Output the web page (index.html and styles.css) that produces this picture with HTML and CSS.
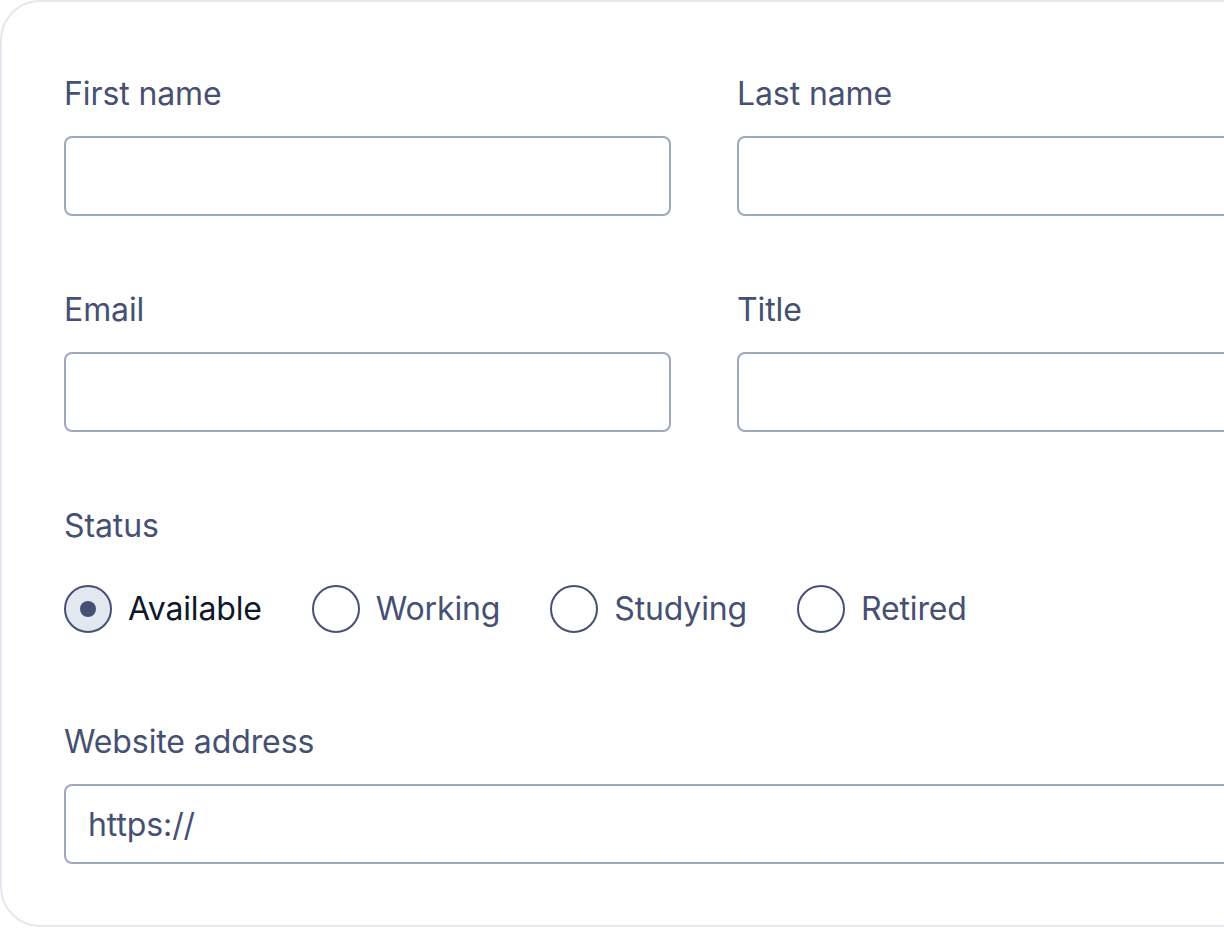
FILE: index.html
```html
<!DOCTYPE html>
<html lang="en">
<head>
<meta charset="utf-8">
<title>Profile form</title>
<link rel="stylesheet" href="styles.css">
</head>
<body>
<form class="card">
  <div class="grid">
    <div class="field">
      <label class="label" for="first">First name</label>
      <input class="input" id="first" type="text">
    </div>
    <div class="field">
      <label class="label" for="last">Last name</label>
      <input class="input" id="last" type="text">
    </div>
    <div class="field">
      <label class="label" for="email">Email</label>
      <input class="input" id="email" type="text">
    </div>
    <div class="field">
      <label class="label" for="title">Title</label>
      <input class="input" id="title" type="text">
    </div>
    <div class="field span">
      <div class="label">Status</div>
      <div class="radios">
        <label class="radio checked"><span class="circle"><span class="dot"></span></span><span class="rtext">Available</span></label>
        <label class="radio"><span class="circle"></span><span class="rtext">Working</span></label>
        <label class="radio"><span class="circle"></span><span class="rtext">Studying</span></label>
        <label class="radio"><span class="circle"></span><span class="rtext">Retired</span></label>
      </div>
    </div>
    <div class="field span">
      <label class="label" for="web">Website address</label>
      <input class="input" id="web" type="text" value="https://">
    </div>
  </div>
</form>
</body>
</html>
```
FILE: styles.css
```css
html, body {
  margin: 0;
  padding: 0;
  background: #ffffff;
  overflow: hidden;
}
body {
  font-family: Inter, "Noto Sans", sans-serif;
  color: #465072;
}
.card {
  box-sizing: border-box;
  width: 1408px;
  height: 927px;
  margin: 0;
  border: 2px solid #e2e8f0;
  border-radius: 40px;
  padding: 68px 62px 0 62px;
  background: #fff;
}
.grid {
  display: grid;
  grid-template-columns: 607px 607px;
  column-gap: 66px;
  row-gap: 70px;
}
.span {
  grid-column: 1 / -1;
}
.field {
  display: flex;
  flex-direction: column;
}
.label {
  font-size: 32px;
  line-height: 48px;
  letter-spacing: -0.1px;
  color: #465072;
  margin-bottom: 18px;
}
.input {
  box-sizing: border-box;
  height: 80px;
  width: 100%;
  border: 2px solid #9fa9bd;
  border-radius: 8px;
  padding: 0 22px;
  font-family: Inter, "Noto Sans", sans-serif;
  font-size: 32px;
  letter-spacing: -0.1px;
  color: #465072;
  background: #fff;
  outline: none;
}
.radios {
  display: flex;
  gap: 50px;
  margin-top: 17px;
  margin-bottom: 15px;
}
.radio {
  display: flex;
  align-items: center;
  gap: 16px;
  font-size: 32px;
  line-height: 48px;
  letter-spacing: -0.15px;
  color: #465072;
}
.circle {
  box-sizing: border-box;
  width: 48px;
  height: 48px;
  border: 2px solid #465072;
  border-radius: 50%;
  display: flex;
  align-items: center;
  justify-content: center;
  background: #fff;
}
.checked .circle {
  background: #e2e8f0;
}
.dot {
  width: 16px;
  height: 16px;
  border-radius: 50%;
  background: #465072;
}
.checked .rtext {
  color: #0f172a;
}
```
